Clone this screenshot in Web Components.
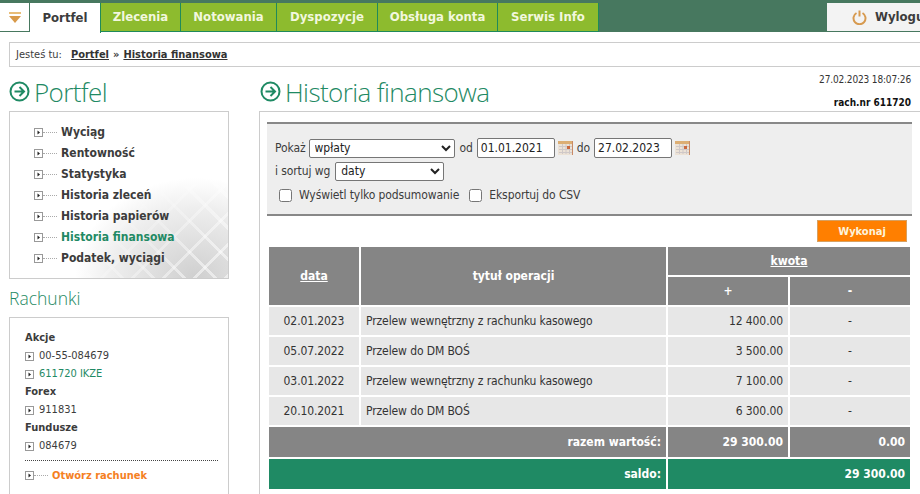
<!DOCTYPE html>
<html lang="pl">
<head>
<meta charset="utf-8">
<title>Historia finansowa</title>
<style>
  html, body { margin: 0; height: 494px; overflow: hidden; background: #fff; }
  body { font: 12px/1.2 "DejaVu Sans Condensed", "DejaVu Sans", sans-serif; font-stretch: condensed; color: #3c3c3c; }
</style>
</head>
<body>
<bos-page></bos-page>
<script>
const boxIcon = `<svg width="9" height="9" viewBox="0 0 9 9" style="flex:none;display:block"><rect x=".5" y=".5" width="8" height="8" fill="#fff" stroke="#999"/><path d="M3.5 2.5 6 4.5 3.5 6.5z" fill="#222"/></svg>`

const arrowIcon = `<svg width="21" height="21" viewBox="0 0 21 21" style="flex:none;display:block;margin-top:-2px"><circle cx="10.5" cy="10.5" r="9" fill="none" stroke="#1f8a64" stroke-width="2"/><path d="M5.5 10.5h9M10.5 6l4.5 4.5-4.500 4.500" fill="none" stroke="#1f8a64" stroke-width="2"/></svg>`

const calIcon = `<svg width="15" height="14" viewBox="0 0 15 14" style="flex:none;display:block"><rect width="15" height="14" fill="#ece2d6"/><rect width="15" height="3" fill="#dcae74"/><path d="M1 5.500h13M1 8.500h13M1 11.500h13M4.500 3v10M8 3v10M11.500 3v10" stroke="#cfc8c8"/><rect x="9" y="5" width="3" height="3" fill="#c9683e"/><path d="M14.500 0v14" stroke="#c98a66"/></svg>`

class BosTab extends HTMLElement {
  constructor() {
    super()
    this.attachShadow({ mode: 'open' })
  }

  connectedCallback() {
    this.shadowRoot.innerHTML = `
      <style>
        :host {
          display: flex; align-items: center; justify-content: center;
          box-sizing: border-box; height: 29px; width: var(--w);
          background: #8dbb2e; color: #f2f7de; font-weight: bold; font-size: 13px;
          border: solid #1f8a5a; border-width: 0 1px 1px 0;
        }
        :host([active]) { background: #fff; color: #3c3c3c; border-bottom: none; height: 30px; }
      </style>
      <slot></slot>
    `
  }
}

class BosTopbar extends HTMLElement {
  constructor() {
    super()
    this.attachShadow({ mode: 'open' })
  }

  connectedCallback() {
    this.shadowRoot.innerHTML = `
      <style>
        :host { display: flex; height: 32px; box-sizing: border-box; padding-top: 3px; background: #47785f; }
        .drop { width: 30px; height: 28px; box-sizing: border-box; background: #fff; border-right: 1px solid #47785f; display: flex; align-items: center; justify-content: center; }
        .tabs { display: flex; }
        .logout { margin-left: auto; width: 93px; height: 28px; box-sizing: border-box; background: #f3f3f3; display: flex; align-items: center; gap: 8px; padding-left: 25px; font-weight: bold; font-size: 13px; white-space: nowrap; overflow: hidden; }
      </style>
      <div class="drop">
        <svg width="12" height="11" viewBox="0 0 12 11"><rect width="12" height="2" fill="#e8bd78"/><path d="M0 4h12L6 11z" fill="#d89a4a"/></svg>
      </div>
      <div class="tabs"><slot></slot></div>
      <div class="logout">
        <svg width="15" height="15" viewBox="0 0 15 15" style="flex:none"><path d="M4.500 3a6 6 0 1 0 6 0" fill="none" stroke="#d79a50" stroke-width="2"/><path d="M7.500 0.500v6" stroke="#d79a50" stroke-width="2"/></svg>
        <span>Wyloguj</span>
      </div>
    `
  }
}

class BosCrumbs extends HTMLElement {
  constructor() {
    super()
    this.attachShadow({ mode: 'open' })
  }

  connectedCallback() {
    this.shadowRoot.innerHTML = `
      <style>
        :host { display: flex; align-items: center; box-sizing: border-box; height: 25px; margin: 10px 0 0 9px; padding: 1px 0 0 6px; border: 1px solid #ccc; border-right: none; font-size: 11px; }
        b { color: #333; text-decoration: underline; }
        .first { margin-left: 9px; }
        i { font-style: normal; margin: 0 4px; font-weight: bold; }
      </style>
      Jesteś tu: <b class="first">Portfel</b><i>»</i><b>Historia finansowa</b>
    `
  }
}

class BosTitle extends HTMLElement {
  constructor() {
    super()
    this.attachShadow({ mode: 'open' })
  }

  connectedCallback() {
    this.shadowRoot.innerHTML = `
      <style>
        :host { display: flex; align-items: center; gap: 4px; box-sizing: border-box; height: 44px; padding-top: 6px; color: #1f8a64; font: 300 26px "Open Sans", sans-serif; letter-spacing: -.6px; white-space: nowrap; }
      </style>
      ${arrowIcon}<slot></slot>
    `
  }
}

class BosSideMenu extends HTMLElement {
  constructor() {
    super()
    this.attachShadow({ mode: 'open' })
  }

  connectedCallback() {
    this.shadowRoot.innerHTML = `
      <style>
        :host {
          display: flex; flex-direction: column; position: relative; overflow: hidden;
          box-sizing: border-box; height: 168px; padding: 10px 0 0 24px; border: 1px solid #ccc;
          background: radial-gradient(ellipse 120px 100px at 85% 100%, #cfcfcf, #eeeeee 70%, #fff 100%);
        }
        :host::before {
          content: ""; position: absolute; right: 0; bottom: 0; width: 170px; height: 140px;
          background: repeating-linear-gradient(45deg, rgba(255,255,255,.5) 0 3px, transparent 3px 22px), repeating-linear-gradient(-45deg, rgba(255,255,255,.5) 0 3px, transparent 3px 22px);
          -webkit-mask-image: linear-gradient(135deg, transparent 40%, #000 85%);
          mask-image: linear-gradient(135deg, transparent 40%, #000 85%);
        }
        ::slotted(*) { position: relative; }
      </style>
      <slot></slot>
    `
  }
}

class BosMenuItem extends HTMLElement {
  constructor() {
    super()
    this.attachShadow({ mode: 'open' })
  }

  connectedCallback() {
    this.shadowRoot.innerHTML = `
      <style>
        :host { display: flex; align-items: center; height: 21px; font-weight: bold; font-size: 12px; color: #3c3c3c; white-space: nowrap; }
        :host([active]) { color: #1f8a64; }
        :host([orange]) { color: #f5801f; font-size: 11px; }
        .dots { width: 14px; margin: 0 4px 0 0; border-top: 1px dotted #aaa; }
      </style>
      ${boxIcon}<span class="dots"></span><slot></slot>
    `
  }
}

class BosAccount extends HTMLElement {
  constructor() {
    super()
    this.attachShadow({ mode: 'open' })
  }

  connectedCallback() {
    this.shadowRoot.innerHTML = `
      <style>
        :host { display: flex; align-items: center; gap: 5px; height: 18px; font-size: 11px; }
        :host([active]) { color: #1f8a64; }
      </style>
      ${boxIcon}<slot></slot>
    `
  }
}

class BosAccounts extends HTMLElement {
  constructor() {
    super()
    this.attachShadow({ mode: 'open' })
  }

  connectedCallback() {
    this.shadowRoot.innerHTML = `
      <style>
        :host { display: block; box-sizing: border-box; height: 190px; padding: 11px 10px 0 15px; border: 1px solid #ccc; }
        .foot { margin-top: 5px; padding-top: 4px; border-top: 1px dotted #444; }
        ::slotted(b) { display: block; height: 18px; line-height: 18px; font-size: 11px; }
      </style>
      <slot></slot>
      <div class="foot"><slot name="foot"></slot></div>
    `
  }
}

class BosFilter extends HTMLElement {
  constructor() {
    super()
    this.attachShadow({ mode: 'open' })
  }

  connectedCallback() {
    this.shadowRoot.innerHTML = `
      <style>
        :host { display: block; box-sizing: border-box; height: 94px; padding: 12px 8px 0 8px; background: #eee; border: solid #888; border-width: 2px 0; font-size: 12px; letter-spacing: -.1px; }
        .row { display: flex; align-items: center; gap: 4px; height: 24px; white-space: nowrap; }
        .row + .row { height: 20px; margin-top: 1px; }
        .row.checks { height: 24px; padding-left: 4px; gap: 7px; margin-top: 2px; }
        select, input[type=text] { font: 12px/1 "DejaVu Sans", sans-serif; font-stretch: condensed; box-sizing: border-box; border: 1px solid #767676; border-radius: 2px; background: #fff; color: #222; margin: 0; }
        select { height: 19px; padding: 0 1px; }
        .pick { margin-left: -1px; }
        .wide { width: 146px; }
        .narrow { width: 109px; margin-left: 1px; }
        input[type=text] { width: 78px; height: 20px; padding: 0 0 0 3px; margin-right: -1px; letter-spacing: 0; }
        input[type=checkbox] { width: 13px; height: 13px; margin: 0; }
        input[type=checkbox].gap { margin-left: 3px; }
        .od { margin-left: 1px; }
      </style>
      <div class="row">
        Pokaż
        <select class="wide pick"><option>wpłaty</option></select>
        <span class="od">od</span>
        <input type="text" value="01.01.2021">${calIcon}
        <span>do</span>
        <input type="text" value="27.02.2023">${calIcon}
      </div>
      <div class="row">
        i sortuj wg
        <select class="narrow"><option>daty</option></select>
      </div>
      <div class="row checks">
        <input type="checkbox"><span>Wyświetl tylko podsumowanie</span>
        <input type="checkbox" class="gap"><span>Eksportuj do CSV</span>
      </div>
    `
  }
}

class BosTable extends HTMLElement {
  constructor() {
    super()
    this.attachShadow({ mode: 'open' })
    this.rows = [
      ['02.01.2023', 'Przelew wewnętrzny z rachunku kasowego', '12 400.00'],
      ['05.07.2022', 'Przelew do DM BOŚ', '3 500.00'],
      ['03.01.2022', 'Przelew wewnętrzny z rachunku kasowego', '7 100.00'],
      ['20.10.2021', 'Przelew do DM BOŚ', '6 300.00']
    ]
  }

  _renderRows() {
    return this.rows.map(([date, title, amount]) => `
      <tr class="row">
        <td class="c">${date}</td>
        <td>${title}</td>
        <td class="r">${amount}</td>
        <td class="c">-</td>
      </tr>
    `).join('')
  }

  connectedCallback() {
    this.shadowRoot.innerHTML = `
      <style>
        :host { display: block; font-size: 12px; }
        table { border-collapse: separate; border-spacing: 2px; table-layout: fixed; width: 645px; }
        th, td { padding: 1px 5px 0; box-sizing: border-box; }
        th { background: #858585; color: #fff; font-weight: bold; text-align: center; font-size: 12px; }
        td { letter-spacing: -.1px; }
        .row td { background: #e7e7e7; height: 28px; color: #333; }
        .c { text-align: center; }
        .r { text-align: right; }
        tr.h1 th, tr.h2 th { height: 28px; }
        .sum th { height: 30px; text-align: right; }
        .saldo th { height: 30px; text-align: right; background: #1f8a64; }
      </style>
      <table>
        <colgroup><col style="width:90px"><col style="width:305px"><col style="width:120px"><col style="width:120px"></colgroup>
        <tr class="h1"><th rowspan="2"><u>data</u></th><th rowspan="2">tytuł operacji</th><th colspan="2"><u>kwota</u></th></tr>
        <tr class="h2"><th>+</th><th>-</th></tr>
        ${this._renderRows()}
        <tr class="sum"><th colspan="2">razem wartość:</th><th>29 300.00</th><th>0.00</th></tr>
        <tr class="saldo"><th colspan="2">saldo:</th><th colspan="2">29 300.00</th></tr>
      </table>
    `
  }
}

class BosPage extends HTMLElement {
  constructor() {
    super()
    this.attachShadow({ mode: 'open' })
  }

  connectedCallback() {
    this.shadowRoot.innerHTML = `
      <style>
        :host { display: block; height: 494px; overflow: hidden; }
        .main { display: grid; grid-template-columns: 220px 1fr; column-gap: 30px; padding-left: 9px; }
        aside { min-width: 0; }
        .head { display: flex; justify-content: space-between; height: 44px; }
        section bos-title { margin-left: 1px; }
        .meta { text-align: right; font-size: 10px; padding: 1px 10px 0 0; line-height: 23px; color: #333; }
        .meta span { letter-spacing: -.15px; }
        .meta b { color: #111; }
        .sub { font: 300 17.5px/1 "Open Sans", sans-serif; color: #1f8a64; margin: 11px 0 9px; height: 18px; }
        .panel { box-sizing: border-box; height: 400px; border: 1px solid #ccc; border-right: none; padding: 10px 9px 0 7px; }
        .action { display: flex; justify-content: flex-end; padding: 4px 5px 3px 0; }
        .run { width: 90px; height: 22px; box-sizing: border-box; padding-top: 1px; border: 1px solid #d8a060; background: #ff7f00; color: #fdf3dc; font-weight: bold; font-size: 11px; display: flex; align-items: center; justify-content: center; }
      </style>
      <bos-topbar>
        <bos-tab active style="--w:71px">Portfel</bos-tab>
        <bos-tab style="--w:80px">Zlecenia</bos-tab>
        <bos-tab style="--w:96px">Notowania</bos-tab>
        <bos-tab style="--w:101px">Dyspozycje</bos-tab>
        <bos-tab style="--w:120px">Obsługa konta</bos-tab>
        <bos-tab style="--w:101px">Serwis Info</bos-tab>
      </bos-topbar>
      <bos-crumbs></bos-crumbs>
      <div class="main">
        <aside>
          <div class="head"><bos-title>Portfel</bos-title></div>
          <bos-side-menu>
            <bos-menu-item>Wyciąg</bos-menu-item>
            <bos-menu-item>Rentowność</bos-menu-item>
            <bos-menu-item>Statystyka</bos-menu-item>
            <bos-menu-item>Historia zleceń</bos-menu-item>
            <bos-menu-item>Historia papierów</bos-menu-item>
            <bos-menu-item active>Historia finansowa</bos-menu-item>
            <bos-menu-item>Podatek, wyciągi</bos-menu-item>
          </bos-side-menu>
          <div class="sub">Rachunki</div>
          <bos-accounts>
            <b>Akcje</b>
            <bos-account>00-55-084679</bos-account>
            <bos-account active>611720 IKZE</bos-account>
            <b>Forex</b>
            <bos-account>911831</bos-account>
            <b>Fundusze</b>
            <bos-account>084679</bos-account>
            <bos-menu-item orange slot="foot">Otwórz rachunek</bos-menu-item>
          </bos-accounts>
        </aside>
        <section>
          <div class="head">
            <bos-title>Historia finansowa</bos-title>
            <div class="meta"><span>27.02.2023 18:07:26</span><br><b>rach.nr 611720</b></div>
          </div>
          <div class="panel">
            <bos-filter></bos-filter>
            <div class="action"><div class="run">Wykonaj</div></div>
            <bos-table></bos-table>
          </div>
        </section>
      </div>
    `
  }
}

customElements.define('bos-tab', BosTab)
customElements.define('bos-topbar', BosTopbar)
customElements.define('bos-crumbs', BosCrumbs)
customElements.define('bos-title', BosTitle)
customElements.define('bos-side-menu', BosSideMenu)
customElements.define('bos-menu-item', BosMenuItem)
customElements.define('bos-account', BosAccount)
customElements.define('bos-accounts', BosAccounts)
customElements.define('bos-filter', BosFilter)
customElements.define('bos-table', BosTable)
customElements.define('bos-page', BosPage)
</script>
</body>
</html>
